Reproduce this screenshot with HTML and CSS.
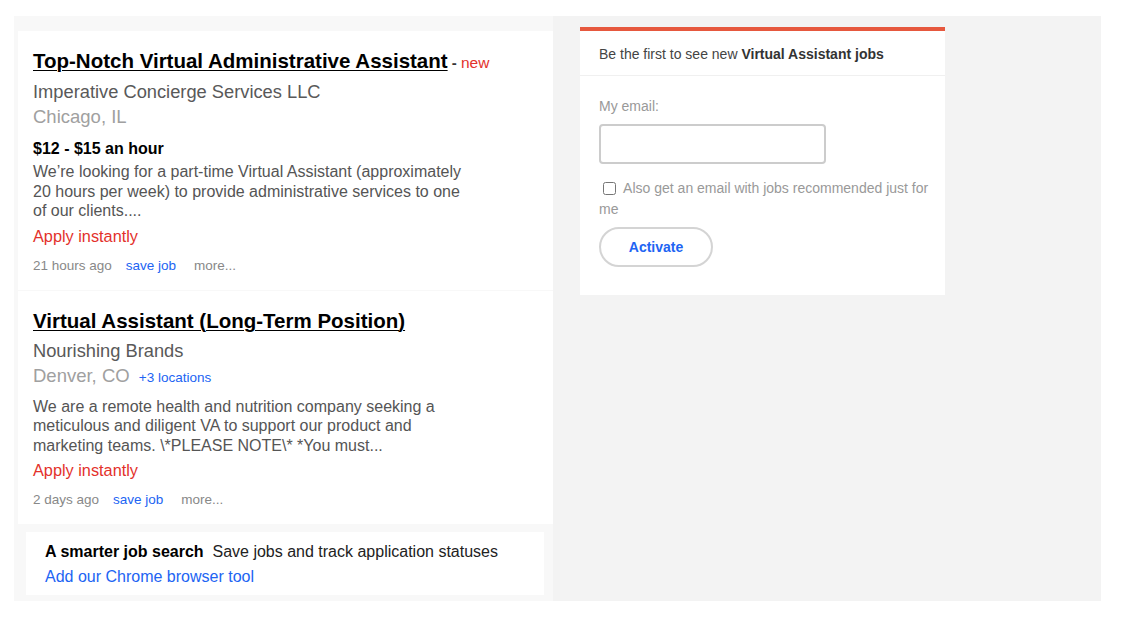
FILE: index.html
```html
<!DOCTYPE html>
<html lang="en">
<head>
<meta charset="utf-8">
<title>Virtual Assistant jobs</title>
<link rel="stylesheet" href="styles.css">
</head>
<body>
<div class="page">
  <div class="results">
    <div class="job">
      <h2 class="job-title"><a href="#">Top-Notch Virtual Administrative Assistant</a><span class="new"> - <em>new</em></span></h2>
      <div class="company">Imperative Concierge Services LLC</div>
      <div class="location">Chicago, IL</div>
      <div class="salary">$12 - $15 an hour</div>
      <p class="summary">We’re looking for a part-time Virtual Assistant (approximately 20 hours per week) to provide administrative services to one of our clients....</p>
      <div class="apply">Apply instantly</div>
      <div class="meta"><span class="date">21 hours ago</span><a class="save" href="#">save job</a><span class="more">more...</span></div>
    </div>
    <div class="job">
      <h2 class="job-title"><a href="#">Virtual Assistant (Long-Term Position)</a></h2>
      <div class="company company-loose">Nourishing Brands</div>
      <div class="location">Denver, CO <a class="more-loc" href="#">+3 locations</a></div>
      <p class="summary summary-loose">We are a remote health and nutrition company seeking a meticulous and diligent VA to support our product and marketing teams. \*PLEASE NOTE\* *You must...</p>
      <div class="apply">Apply instantly</div>
      <div class="meta"><span class="date">2 days ago</span><a class="save" href="#">save job</a><span class="more">more...</span></div>
    </div>
    <div class="promo">
      <div><strong>A smarter job search</strong>&nbsp; Save jobs and track application statuses</div>
      <a href="#">Add our Chrome browser tool</a>
    </div>
  </div>
  <div class="sidebar">
    <div class="alert">
      <div class="alert-head">Be the first to see new <b>Virtual Assistant jobs</b></div>
      <div class="alert-body">
        <label class="field-label" for="email">My email:</label>
        <input class="email" id="email" type="text">
        <p class="opt"><input class="check" type="checkbox"> Also get an email with jobs recommended just for me</p>
        <button class="activate" type="button">Activate</button>
      </div>
    </div>
  </div>
</div>
</body>
</html>
```

FILE: styles.css
```css
* { box-sizing: border-box; }
html, body { margin: 0; background: #fff; }
body {
  font-family: "Liberation Sans", Arial, Helvetica, sans-serif;
  color: #333;
}
.page {
  display: flex;
  margin: 16px 0 0 14px;
  width: 1087px;
  height: 585px;
}
.results {
  width: 539px;
  background: #f8f8f8;
  padding: 15px 0 0 4px;
}
.job {
  background: #fff;
  padding: 18px 15px 15px;
  margin-bottom: 1px;
}
.job-title {
  margin: 0;
  font-size: 20.5px;
  line-height: 24px;
  font-weight: bold;
}
.job-title a { color: #000; text-decoration: underline; text-underline-offset: 2px; text-decoration-thickness: 1px; }
.new { color: #333; font-size: 15px; font-weight: bold; }
.new em { color: #e3312b; font-style: normal; font-weight: normal; font-size: 15.5px; }
.company {
  margin-top: 4px;
  font-size: 18.3px;
  line-height: 25px;
  color: #595959;
}
.company-loose { margin-top: 5px; }
.location {
  font-size: 18.5px;
  line-height: 26px;
  color: #a0a0a0;
}
.more-loc { font-size: 13.5px; color: #2164f3; text-decoration: none; margin-left: 4px; }
.salary {
  margin-top: 9px;
  font-size: 16px;
  line-height: 20px;
  font-weight: bold;
  color: #000;
}
.summary {
  margin: 3px 0 0;
  width: 440px;
  font-size: 16px;
  line-height: 19.5px;
  color: #555;
}
.summary-loose { margin-top: 6px; }
.apply {
  margin-top: 4px;
  font-size: 16.3px;
  line-height: 22px;
  color: #e3312b;
}
.meta {
  margin-top: 10px;
  font-size: 13.5px;
  line-height: 18px;
  color: #888;
  display: flex;
}
.save { color: #2164f3; text-decoration: none; margin-left: 14px; }
.more { margin-left: 18px; }
.promo {
  margin: 8px 0 0 8px;
  width: 518px;
  background: #fff;
  padding: 6.5px 19px;
  font-size: 16px;
  line-height: 25px;
  color: #222;
}
.promo strong { color: #000; }
.promo a { color: #2164f3; text-decoration: none; }
.sidebar {
  flex: 1;
  background: #f3f3f3;
  padding: 11px 0 0 27px;
}
.alert {
  width: 365px;
  background: #fff;
  border-top: 4px solid #e6583e;
}
.alert-head {
  height: 45px;
  padding: 13px 19px 0;
  font-size: 14px;
  line-height: 20px;
  color: #444;
  border-bottom: 1px solid #f0f0f0;
}
.alert-head b { color: #333; }
.alert-body {
  padding: 21px 12px 28px 19px;
}
.field-label {
  display: block;
  font-size: 14px;
  line-height: 18px;
  color: #999;
}
.email {
  display: block;
  margin-top: 9px;
  width: 227px;
  height: 40px;
  border: 2px solid #ccc;
  border-radius: 4px;
  background: #fff;
}
.opt {
  margin: 14px 0 0;
  font-size: 14px;
  line-height: 21px;
  color: #999;
}
.check {
  width: 13px;
  height: 13px;
  margin: 0 4px 0 4px;
  vertical-align: -2px;
}
.activate {
  display: block;
  margin-top: 7px;
  width: 114px;
  height: 40px;
  border: 2px solid #d4d4d4;
  border-radius: 20px;
  background: #fff;
  font-family: inherit;
  font-size: 14px;
  font-weight: bold;
  color: #2164f3;
}
```
